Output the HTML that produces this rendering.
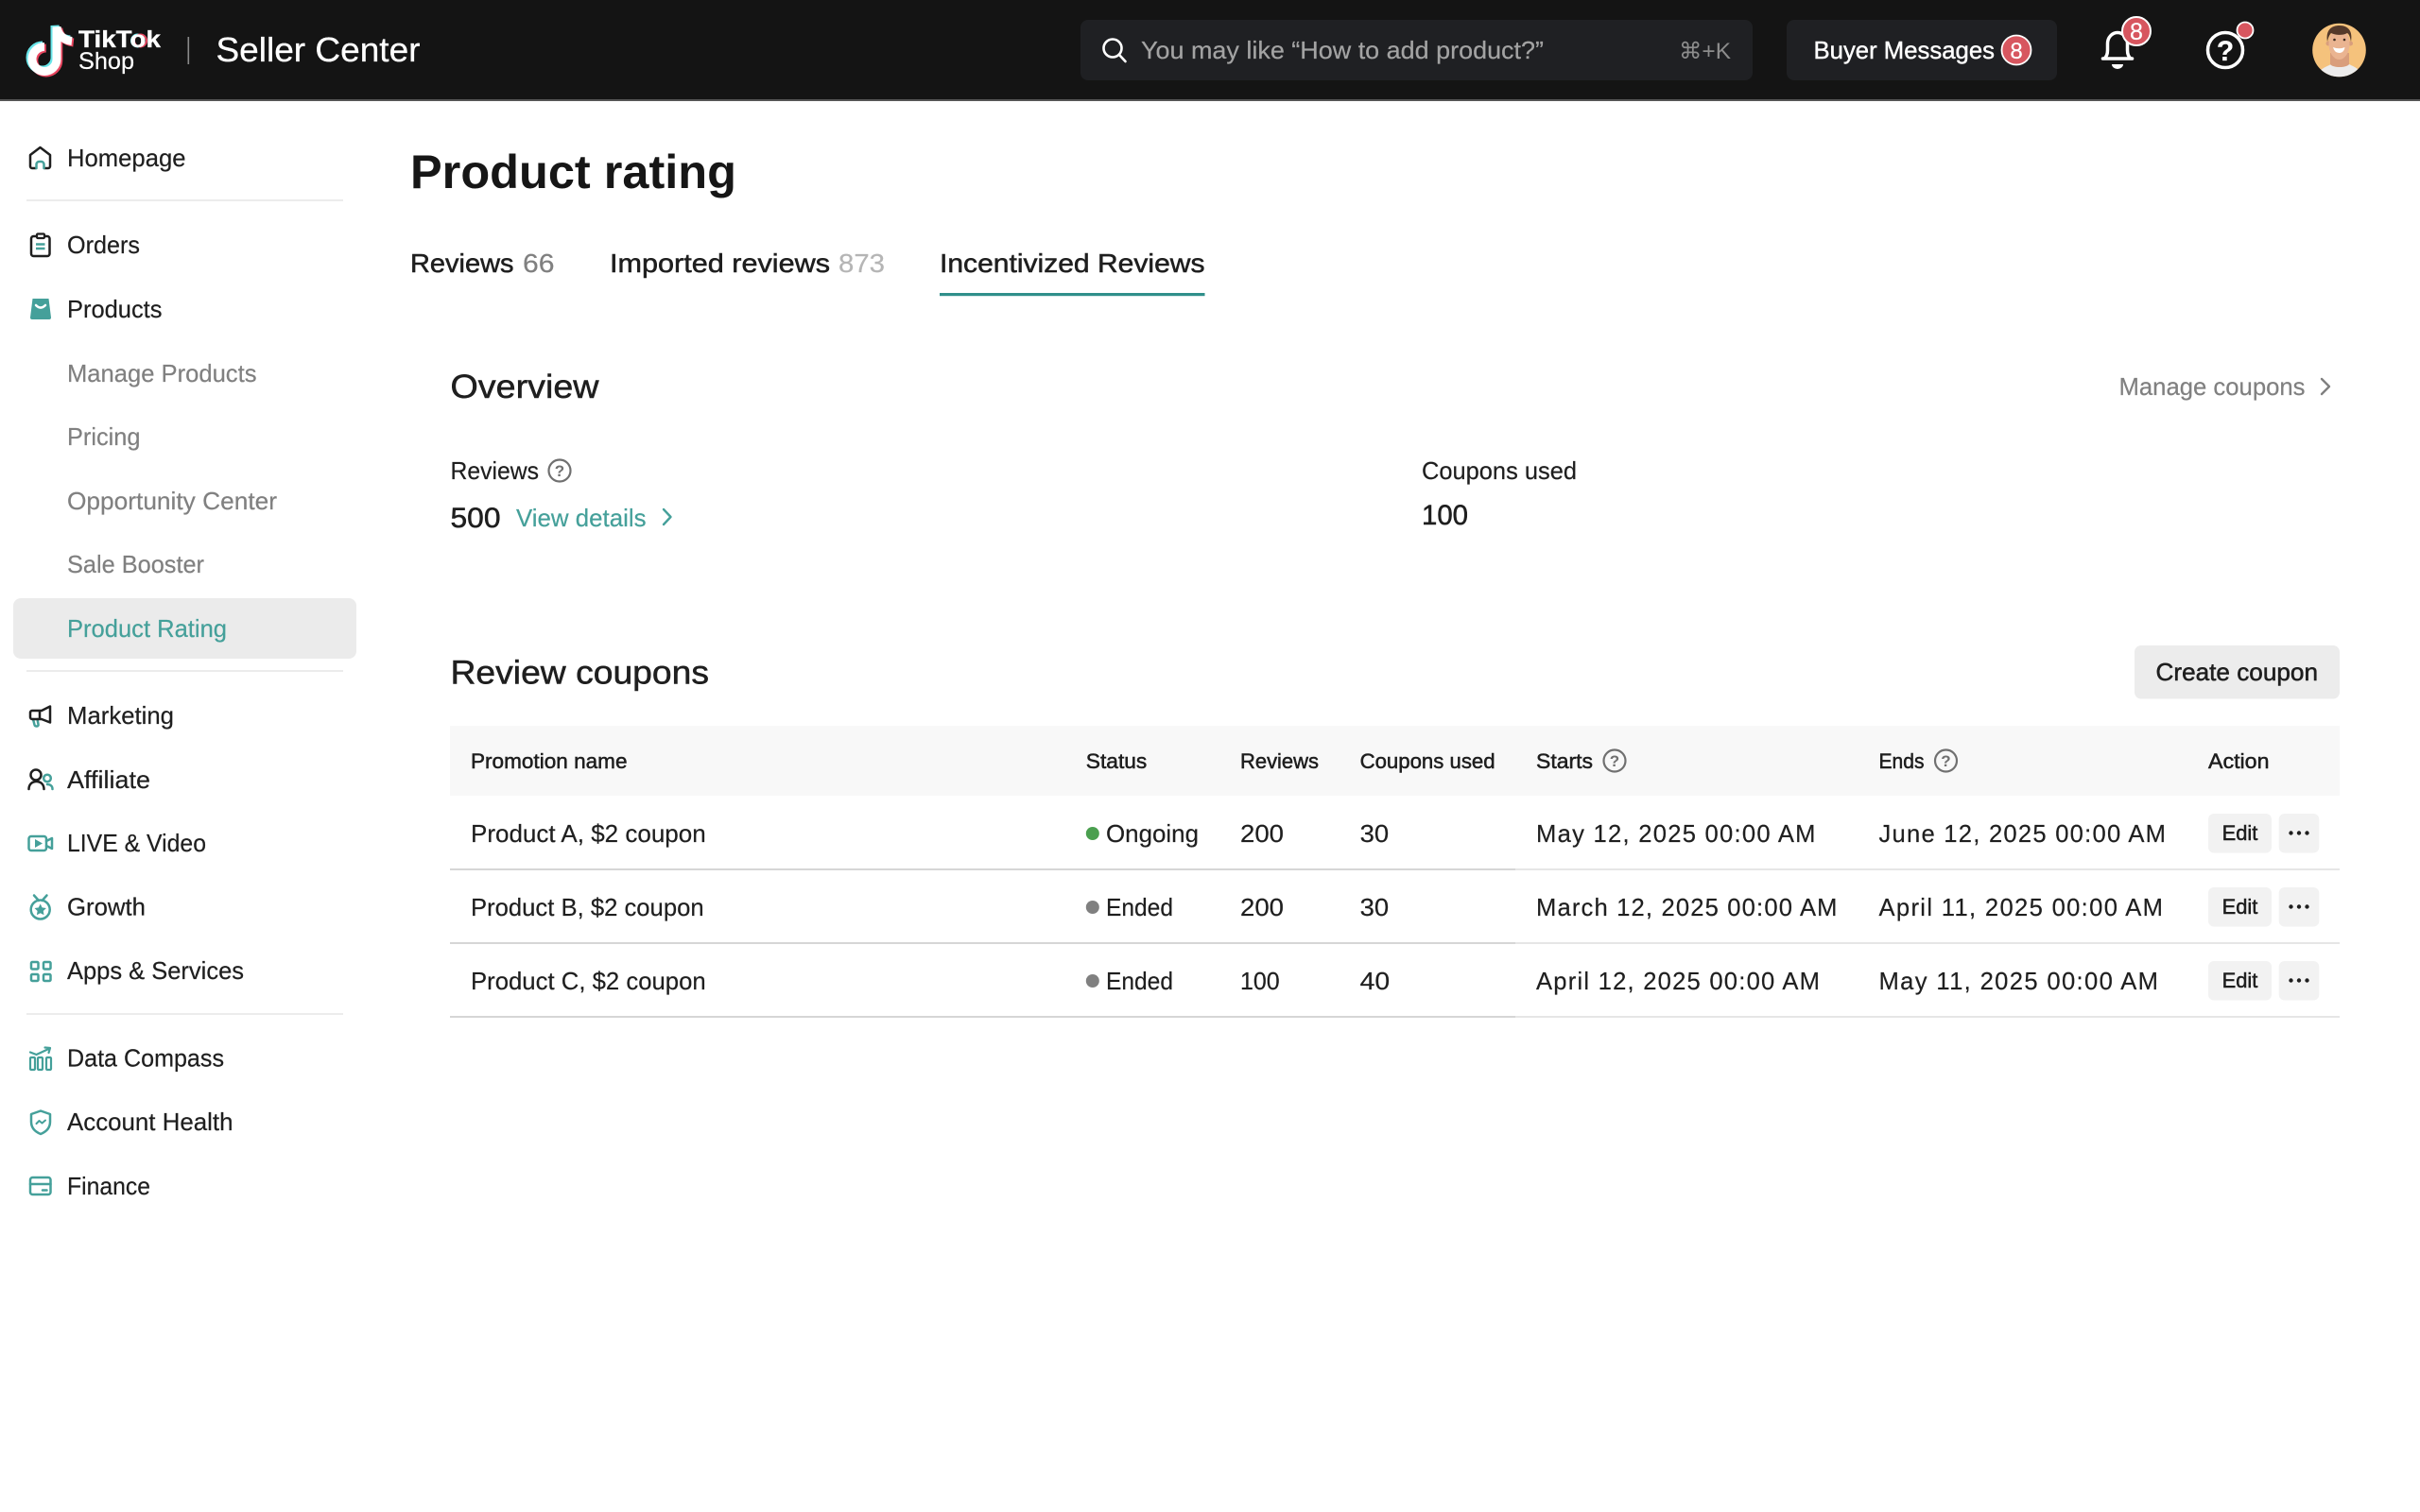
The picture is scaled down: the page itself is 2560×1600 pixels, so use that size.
<!DOCTYPE html>
<html lang="en">
<head>
<meta charset="utf-8">
<title>Product rating - Seller Center</title>
<style>
html,body{margin:0;padding:0;background:#fff;width:2560px;height:1600px;overflow:hidden}
svg{display:block}
text{font-family:"Liberation Sans","DejaVu Sans",sans-serif;font-size:25.6px;fill:#1f1f1f;stroke:#1f1f1f;stroke-width:.2px}
text.g{fill:#808080;stroke:#808080}
text.t{fill:#45a09a;stroke:#45a09a}
text.w{fill:#fff;stroke:#fff}
text.m{stroke:#1a1a1a;stroke-width:.5px}
text.h{font-size:22.4px;stroke:#1a1a1a;stroke-width:.5px}
.dk{fill:none;stroke:#1f1f1f;stroke-width:2.5;stroke-linecap:round;stroke-linejoin:round}
.tl{fill:none;stroke:#45a09a;stroke-width:2.5;stroke-linecap:round;stroke-linejoin:round}
.hp{fill:none;stroke:#707070;stroke-width:2.2}
text.hq{font-size:17px;fill:#707070;stroke:none;font-weight:bold;text-anchor:middle}
</style>
</head>
<body>
<svg xmlns="http://www.w3.org/2000/svg" width="2560" height="1600" viewBox="0 0 2560 1600">
<rect width="2560" height="1600" fill="#fff"/>

<!-- Header -->
<rect width="2560" height="106" fill="#141414"/>
<rect y="105" width="2560" height="2" fill="#555"/>
<g fill="none" stroke-width="9">
<path transform="translate(-2 -1.5)" stroke="#69e6ea" d="M47 49.500a13 13 0 1 0 13 13V28.500c1 8 7 14 16 15"/>
<path transform="translate(1.800 1.500)" stroke="#e8455f" d="M47 49.500a13 13 0 1 0 13 13V28.500c1 8 7 14 16 15"/>
<path stroke="#fff" d="M47 49.500a13 13 0 1 0 13 13V28.500c1 8 7 14 16 15"/>
</g>
<circle cx="145.500" cy="43" r="6.500" fill="none" stroke="#69e6ea" stroke-width="2"/>
<circle cx="148.500" cy="43" r="6.500" fill="none" stroke="#e8455f" stroke-width="2"/>
<text class="w" x="83" y="50" style="font-size:25px;font-weight:bold;stroke-width:.3px" textLength="87" lengthAdjust="spacingAndGlyphs">TikTok</text>
<text class="w" x="83" y="73" style="font-size:25px" textLength="59" lengthAdjust="spacingAndGlyphs">Shop</text>
<rect x="198.500" y="39" width="1.600" height="29" fill="#8a8a8a"/>
<text class="w" x="228.500" y="65" style="font-size:36px;stroke-width:.3px" textLength="216" lengthAdjust="spacingAndGlyphs">Seller Center</text>

<rect x="1143" y="21" width="711" height="64" rx="8" fill="#1f2023"/>
<circle cx="1177" cy="51" r="9.500" fill="none" stroke="#fff" stroke-width="2.600"/>
<path d="M1184 58l6.500 7" stroke="#fff" stroke-width="2.600" stroke-linecap="round"/>
<text x="1207" y="62" style="fill:#a3a3a3;stroke:#a3a3a3" textLength="426" lengthAdjust="spacingAndGlyphs">You may like “How to add product?”</text>
<text x="1776" y="62" style="fill:#8c8c8c;stroke:none;font-size:24px" textLength="55" lengthAdjust="spacingAndGlyphs">⌘+K</text>

<rect x="1890" y="21" width="286" height="64" rx="8" fill="#1f2023"/>
<text class="w" x="1918.500" y="62" style="stroke-width:.4px" textLength="191.500" lengthAdjust="spacingAndGlyphs">Buyer Messages</text>
<circle cx="2133" cy="53" r="15.500" fill="#d7565f" stroke="#fff" stroke-width="1.800"/>
<text class="w" x="2133" y="62" style="font-size:24px" text-anchor="middle">8</text>

<!-- Bell -->
<path d="M2224.500 62H2255.500" stroke="#fff" stroke-width="3.600" stroke-linecap="round"/>
<path d="M2226 62c2.500-2 3.500-5 3.500-9V46a10.500 11.500 0 0 1 21 0v7c0 4 1 7 3.500 9" fill="none" stroke="#fff" stroke-width="3.500"/>
<path d="M2234 68h12a6 5 0 0 1-12 0z" fill="#fff"/>
<circle cx="2260" cy="33" r="15" fill="#d7565f" stroke="#fff" stroke-width="2"/>
<text class="w" x="2260" y="42" style="font-size:25px" text-anchor="middle">8</text>

<!-- Help -->
<circle cx="2354" cy="53" r="18.500" fill="none" stroke="#fff" stroke-width="3.500"/>
<text class="w" x="2354" y="64" style="font-size:30px;font-weight:bold" text-anchor="middle">?</text>
<circle cx="2375" cy="32" r="8.500" fill="#d7565f" stroke="#fff" stroke-width="1.800"/>

<!-- Avatar -->
<clipPath id="av"><circle cx="2474.500" cy="53" r="28.300"/></clipPath>
<g clip-path="url(#av)">
<rect x="2445" y="24" width="60" height="60" fill="#f5c27c"/>
<path d="M2450 82C2453 73 2460 71 2466 68C2470 71 2480 71 2485 68C2491 71 2497 73 2500 82Z" fill="#ececec"/>
<path d="M2465 56h20v12c-3 4-17 4-20 0z" fill="#d99e7c"/>
<circle cx="2463" cy="46" r="2.500" fill="#d99e7c"/><circle cx="2486.500" cy="46" r="2.500" fill="#d99e7c"/>
<ellipse cx="2474.500" cy="46.500" rx="11" ry="16.500" fill="#eab491"/>
<path d="M2462 44C2460 32 2466 27 2475 27C2484 27 2489 33 2487 44C2486 39 2485 36 2483 35C2478 38 2470 37 2466 35C2464 37 2463 40 2462 44Z" fill="#54392a"/>
<circle cx="2469.500" cy="42" r="1.300" fill="#3a2a20"/><circle cx="2480" cy="42" r="1.300" fill="#3a2a20"/>
<path d="M2468 50q6.500 2.500 12.500 0q-1 6-6 6q-5 0-6.500-6z" fill="#fff"/>
</g>

<!-- Sidebar -->
<path class="dk" d="M38 178H34a2 2 0 0 1-2-2V164L42.500 156 53 164V176a2 2 0 0 1-2 2H47"/>
<path class="tl" d="M38.500 178V174a3 3 0 0 1 3-3h2a3 3 0 0 1 3 3V178"/>
<text x="71" y="176" textLength="125.500" lengthAdjust="spacingAndGlyphs">Homepage</text>
<rect x="28" y="211" width="335" height="2" fill="#ececec"/>

<rect class="dk" x="33" y="250" width="19.500" height="21" rx="2.500"/>
<rect x="39" y="247.500" width="8" height="4.500" rx="1" fill="#fff" stroke="#1f1f1f" stroke-width="2.200"/>
<path d="M38 258.500h9.500M38 263h9.500" stroke="#45a09a" stroke-width="2.500"/>
<text x="71" y="268" textLength="77" lengthAdjust="spacingAndGlyphs">Orders</text>

<path d="M34.500 316H51.500L54 336a2 2 0 0 1-2 2H34a2 2 0 0 1-2-2Z" fill="#45a09a"/>
<path d="M38 323q5 5 10 0" fill="none" stroke="#fff" stroke-width="2.500" stroke-linecap="round"/>
<text x="71" y="336" textLength="100.500" lengthAdjust="spacingAndGlyphs">Products</text>

<text class="g" x="71" y="404" textLength="200.500" lengthAdjust="spacingAndGlyphs">Manage Products</text>
<text class="g" x="71" y="471" textLength="77.500" lengthAdjust="spacingAndGlyphs">Pricing</text>
<text class="g" x="71" y="539" textLength="222" lengthAdjust="spacingAndGlyphs">Opportunity Center</text>
<text class="g" x="71" y="606" textLength="145" lengthAdjust="spacingAndGlyphs">Sale Booster</text>

<rect x="14" y="633" width="363" height="64" rx="8" fill="#ebebeb"/>
<text class="t" x="71" y="674" textLength="169" lengthAdjust="spacingAndGlyphs">Product Rating</text>
<rect x="28" y="709" width="335" height="2" fill="#ececec"/>

<path class="tl" d="M35 761l1.500 6a2 2 0 0 0 2 1.500h.500a1.500 1.500 0 0 0 1.500-2L39.500 761"/>
<path class="dk" d="M44 752H34a2 2 0 0 0-2 2v5a2 2 0 0 0 2 2H44l9 3.500V747.500ZM42 752V761"/>
<text x="71" y="766" textLength="113" lengthAdjust="spacingAndGlyphs">Marketing</text>

<circle class="dk" cx="38" cy="820" r="5.500"/>
<path class="dk" d="M30.500 835c0-5 3.500-8 8-8s8 3 8 8"/>
<circle class="tl" cx="50" cy="823.500" r="3.800"/>
<path class="tl" d="M50 830c3.500 0 5.500 2 5.500 5"/>
<text x="71" y="834" textLength="88" lengthAdjust="spacingAndGlyphs">Affiliate</text>

<rect class="tl" x="30.500" y="885" width="18.500" height="15" rx="2.500"/>
<path class="tl" d="M49 890l6-3v11l-6-3"/>
<path d="M37 888l8 4.500-8 4.500z" fill="#45a09a"/>
<text x="71" y="901" textLength="147" lengthAdjust="spacingAndGlyphs">LIVE &amp; Video</text>

<circle class="tl" cx="42.700" cy="962.500" r="10"/>
<path class="tl" d="M36 947.500l5 5.500M49.500 947.500l-5 5.500"/>
<path d="M42.700 956.500l1.900 3.900 4.300.600-3.100 3 .700 4.300-3.800-2-3.800 2 .700-4.300-3.100-3 4.300-.600z" fill="#45a09a"/>
<text x="71" y="968.500" textLength="83" lengthAdjust="spacingAndGlyphs">Growth</text>

<g class="tl"><rect x="33" y="1018" width="7.500" height="7.500" rx="1.200"/><rect x="46" y="1018" width="7.500" height="7.500" rx="1.200"/><rect x="33" y="1031" width="7.500" height="7" rx="1.200"/><rect x="46" y="1031" width="7.500" height="7" rx="1.200"/></g>
<text x="71" y="1036" textLength="187" lengthAdjust="spacingAndGlyphs">Apps &amp; Services</text>
<rect x="28" y="1072" width="335" height="2" fill="#ececec"/>

<g class="tl" style="stroke-width:2.200"><rect x="32" y="1119" width="5" height="13" rx="1"/><rect x="40" y="1119" width="5" height="13" rx="1"/><rect x="49" y="1119" width="5" height="13" rx="1"/>
<path d="M32 1113.500l6.500 2.500 14-6.500M47.500 1108.500l5.500 .500-1.500 5"/></g>
<text x="71" y="1128.500" textLength="166" lengthAdjust="spacingAndGlyphs">Data Compass</text>

<path class="tl" d="M43 1175.500L53 1179V1187C53 1194 48 1198 43 1200C38 1198 33 1194 33 1187V1179Z"/>
<path class="tl" style="stroke-width:2" d="M38.500 1189l3-3 3 2.500 3.500-3"/>
<text x="71" y="1196" textLength="175.500" lengthAdjust="spacingAndGlyphs">Account Health</text>

<rect class="tl" x="32" y="1246" width="21.500" height="18" rx="2.500"/>
<path class="tl" d="M32 1253H53.500M45 1259.500H49.500"/>
<text x="71" y="1264" textLength="88" lengthAdjust="spacingAndGlyphs">Finance</text>

<!-- Title + tabs -->
<text x="434" y="199" style="font-size:50px;font-weight:bold;fill:#161616;stroke:none" textLength="345" lengthAdjust="spacingAndGlyphs">Product rating</text>
<text class="m" x="434" y="288" style="font-size:28px" textLength="109.500" lengthAdjust="spacingAndGlyphs">Reviews</text>
<text x="553" y="288" style="font-size:28px;fill:#808080;stroke:#808080" textLength="33.500" lengthAdjust="spacingAndGlyphs">66</text>
<text class="m" x="645" y="288" style="font-size:28px" textLength="233" lengthAdjust="spacingAndGlyphs">Imported reviews</text>
<text x="887" y="288" style="font-size:28px;fill:#b5b5b5;stroke:#b5b5b5" textLength="49" lengthAdjust="spacingAndGlyphs">873</text>
<text class="m" x="994" y="288" style="font-size:28px" textLength="280.500" lengthAdjust="spacingAndGlyphs">Incentivized Reviews</text>
<rect x="994" y="310" width="280.500" height="3.200" fill="#2f8f8a"/>

<!-- Overview -->
<text class="m" x="476.500" y="421" style="font-size:35px" textLength="157" lengthAdjust="spacingAndGlyphs">Overview</text>
<text class="g" x="2241.500" y="418" textLength="197" lengthAdjust="spacingAndGlyphs">Manage coupons</text>
<path d="M2456 401l8 8-8 8" fill="none" stroke="#808080" stroke-width="2.400" stroke-linecap="round" stroke-linejoin="round"/>

<text x="476.500" y="507" textLength="93.500" lengthAdjust="spacingAndGlyphs">Reviews</text>
<circle class="hp" cx="592" cy="498" r="11.500"/>
<text class="hq" x="592" y="504">?</text>
<text class="m" x="476.500" y="558" style="font-size:30px" textLength="53" lengthAdjust="spacingAndGlyphs">500</text>
<text class="t" x="546" y="557" textLength="137.500" lengthAdjust="spacingAndGlyphs">View details</text>
<path d="M702 539l7.500 8-7.500 8" fill="none" stroke="#45a09a" stroke-width="2.400" stroke-linecap="round" stroke-linejoin="round"/>

<text x="1504" y="507" textLength="164" lengthAdjust="spacingAndGlyphs">Coupons used</text>
<text class="m" x="1504" y="555" style="font-size:30px" textLength="49" lengthAdjust="spacingAndGlyphs">100</text>

<!-- Review coupons -->
<text class="m" x="476.500" y="723.500" style="font-size:35px" textLength="273.500" lengthAdjust="spacingAndGlyphs">Review coupons</text>
<rect x="2258" y="683" width="217" height="56.500" rx="7" fill="#ececec"/>
<text class="m" x="2280.500" y="720" textLength="171.500" lengthAdjust="spacingAndGlyphs">Create coupon</text>

<rect x="476" y="768" width="1999" height="74" fill="#f8f8f8"/>
<text class="h" x="498" y="813" textLength="165.500" lengthAdjust="spacingAndGlyphs">Promotion name</text>
<text class="h" x="1148.800" y="813" textLength="64.500" lengthAdjust="spacingAndGlyphs">Status</text>
<text class="h" x="1312" y="813" textLength="83" lengthAdjust="spacingAndGlyphs">Reviews</text>
<text class="h" x="1438.600" y="813" textLength="143" lengthAdjust="spacingAndGlyphs">Coupons used</text>
<text class="h" x="1625" y="813" textLength="60" lengthAdjust="spacingAndGlyphs">Starts</text>
<circle class="hp" cx="1708" cy="805" r="11.500"/><text class="hq" x="1708" y="811">?</text>
<text class="h" x="1987.500" y="813" textLength="48" lengthAdjust="spacingAndGlyphs">Ends</text>
<circle class="hp" cx="2058.500" cy="805" r="11.500"/><text class="hq" x="2058.500" y="811">?</text>
<text class="h" x="2336" y="813" textLength="64.500" lengthAdjust="spacingAndGlyphs">Action</text>

<!-- Row A -->
<text x="498" y="891" textLength="248.700" lengthAdjust="spacingAndGlyphs">Product A, $2 coupon</text>
<circle cx="1155.800" cy="882" r="7" fill="#4a9f4f"/>
<text x="1170" y="891" textLength="98" lengthAdjust="spacingAndGlyphs">Ongoing</text>
<text x="1312" y="891" textLength="46" lengthAdjust="spacingAndGlyphs">200</text>
<text x="1438.600" y="891" textLength="30.500" lengthAdjust="spacingAndGlyphs">30</text>
<text x="1625" y="891" textLength="295.500">May 12, 2025 00:00 AM</text>
<text x="1987.500" y="891" textLength="303.500">June 12, 2025 00:00 AM</text>
<rect x="2336" y="861" width="67" height="41.500" rx="6" fill="#f2f2f2"/>
<text class="h" x="2350.600" y="889" textLength="37.800" lengthAdjust="spacingAndGlyphs">Edit</text>
<rect x="2410.700" y="861" width="42.600" height="41.500" rx="6" fill="#f2f2f2"/>
<g fill="#1f1f1f"><circle cx="2423.500" cy="881.500" r="2.200"/><circle cx="2432" cy="881.500" r="2.200"/><circle cx="2440.500" cy="881.500" r="2.200"/></g>
<rect x="476" y="919" width="1127" height="2" fill="#d6d6d6"/><rect x="1603" y="919" width="872" height="2" fill="#e6e6e6"/>

<!-- Row B -->
<text x="498" y="969" textLength="246.600" lengthAdjust="spacingAndGlyphs">Product B, $2 coupon</text>
<circle cx="1155.800" cy="960" r="7" fill="#808080"/>
<text x="1170" y="969" textLength="71" lengthAdjust="spacingAndGlyphs">Ended</text>
<text x="1312" y="969" textLength="46" lengthAdjust="spacingAndGlyphs">200</text>
<text x="1438.600" y="969" textLength="30.500" lengthAdjust="spacingAndGlyphs">30</text>
<text x="1625" y="969" textLength="318.500">March 12, 2025 00:00 AM</text>
<text x="1987.500" y="969" textLength="300.500">April 11, 2025 00:00 AM</text>
<rect x="2336" y="939" width="67" height="41.500" rx="6" fill="#f2f2f2"/>
<text class="h" x="2350.600" y="967" textLength="37.800" lengthAdjust="spacingAndGlyphs">Edit</text>
<rect x="2410.700" y="939" width="42.600" height="41.500" rx="6" fill="#f2f2f2"/>
<g fill="#1f1f1f"><circle cx="2423.500" cy="959.500" r="2.200"/><circle cx="2432" cy="959.500" r="2.200"/><circle cx="2440.500" cy="959.500" r="2.200"/></g>
<rect x="476" y="997" width="1127" height="2" fill="#d6d6d6"/><rect x="1603" y="997" width="872" height="2" fill="#e6e6e6"/>

<!-- Row C -->
<text x="498" y="1047" textLength="248.700" lengthAdjust="spacingAndGlyphs">Product C, $2 coupon</text>
<circle cx="1155.800" cy="1038" r="7" fill="#808080"/>
<text x="1170" y="1047" textLength="71" lengthAdjust="spacingAndGlyphs">Ended</text>
<text x="1312" y="1047" textLength="41.700" lengthAdjust="spacingAndGlyphs">100</text>
<text x="1438.600" y="1047" textLength="31.500" lengthAdjust="spacingAndGlyphs">40</text>
<text x="1625" y="1047" textLength="300">April 12, 2025 00:00 AM</text>
<text x="1987.500" y="1047" textLength="295.500">May 11, 2025 00:00 AM</text>
<rect x="2336" y="1017" width="67" height="41.500" rx="6" fill="#f2f2f2"/>
<text class="h" x="2350.600" y="1045" textLength="37.800" lengthAdjust="spacingAndGlyphs">Edit</text>
<rect x="2410.700" y="1017" width="42.600" height="41.500" rx="6" fill="#f2f2f2"/>
<g fill="#1f1f1f"><circle cx="2423.500" cy="1037.500" r="2.200"/><circle cx="2432" cy="1037.500" r="2.200"/><circle cx="2440.500" cy="1037.500" r="2.200"/></g>
<rect x="476" y="1075" width="1127" height="2" fill="#d6d6d6"/><rect x="1603" y="1075" width="872" height="2" fill="#e6e6e6"/>
</svg>
</body>
</html>
